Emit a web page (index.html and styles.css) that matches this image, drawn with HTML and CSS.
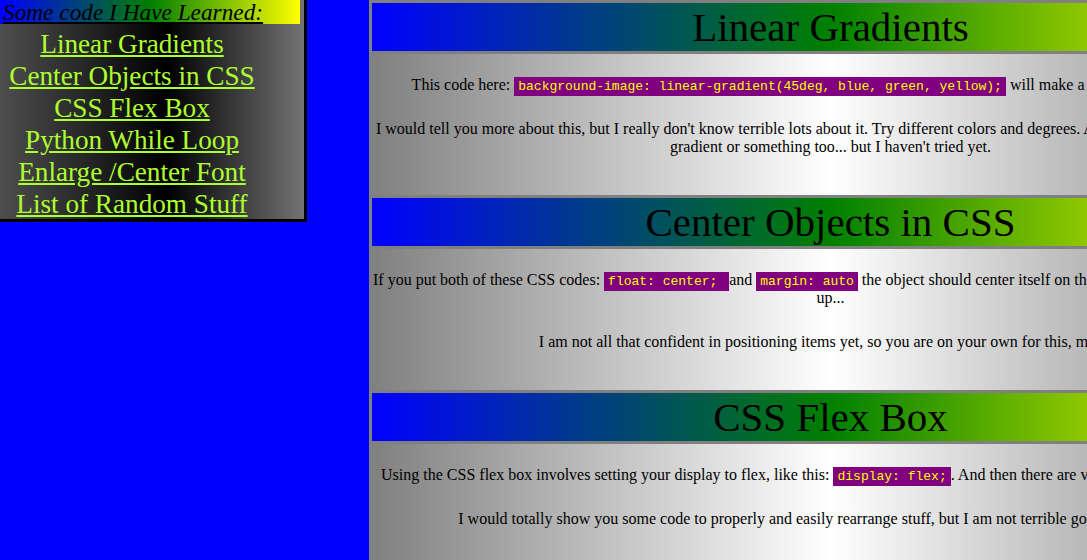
FILE: index.html
```html
<!DOCTYPE html>
<html lang="en">
<head>
<meta charset="utf-8">
<title>Some code I Have Learned</title>
<link rel="stylesheet" href="styles.css">
</head>
<body>
<nav class="nav">
  <div class="nav-title">Some code I Have Learned:</div>
  <ul class="nav-links">
    <li><a href="#linear">Linear Gradients</a></li>
    <li><a href="#center">Center Objects in CSS</a></li>
    <li><a href="#flex">CSS Flex Box</a></li>
    <li><a href="#python">Python While Loop</a></li>
    <li><a href="#font">Enlarge /Center Font</a></li>
    <li><a href="#random">List of Random Stuff</a></li>
  </ul>
</nav>
<main class="main">
  <section class="topic" id="linear">
    <h2 class="topic-title">Linear Gradients</h2>
    <div class="topic-body">
      <p>This code here: <code>background-image: linear-gradient(45deg, blue, green, yellow);</code> will make a gradient like the headers.</p>
      <p>I would tell you more about this, but I really don't know terrible lots about it. Try different colors and degrees. And you can also make a radial gradient or something too... but I haven't tried yet.</p>
    </div>
  </section>
  <section class="topic" id="center">
    <h2 class="topic-title">Center Objects in CSS</h2>
    <div class="topic-body">
      <p>If you put both of these CSS codes: <code>float: center; </code> and <code>margin: auto</code> the object should center itself on the screen. But it can mess things up...</p>
      <p>I am not all that confident in positioning items yet, so you are on your own for this, mostly.</p>
    </div>
  </section>
  <section class="topic" id="flex">
    <h2 class="topic-title">CSS Flex Box</h2>
    <div class="topic-body">
      <p>Using the CSS flex box involves setting your display to flex, like this: <code>display: flex;</code>. And then there are various ways to arrange things.</p>
      <p>I would totally show you some code to properly and easily rearrange stuff, but I am not terrible good at it by myself.</p>
    </div>
  </section>
</main>
</body>
</html>
```

FILE: styles.css
```css
html {
  overflow: hidden;
  background: #0000ff;
}

body {
  margin: 0;
  display: flex;
  align-items: flex-start;
  background: #0000ff;
  font-family: "Liberation Serif", "Times New Roman", serif;
  font-size: 16px;
  color: #000;
}

.nav {
  flex: none;
  width: 304px;
  border-right: 3px solid #000;
  border-bottom: 3px solid #000;
  background: linear-gradient(to right, #4e4e4e 0%, #000 55%, #737373 100%);
}

.nav-title {
  width: 297px;
  height: 24px;
  padding-left: 3px;
  font-size: 23.3px;
  line-height: 24px;
  font-style: italic;
  text-decoration: underline;
  background: linear-gradient(to right, #0000ff, #008000, #ffff00);
  white-space: nowrap;
}

.nav-links {
  list-style: none;
  margin: 0;
  padding: 4px 40px 0 0;
  height: 191px;
  text-align: center;
}

.nav-links li {
  font-size: 27.2px;
  line-height: 32px;
}

.nav-links a {
  color: #adff2f;
  text-decoration: underline;
}

.main {
  flex: none;
  width: 917px;
  margin-left: 62px;
  border-left: 3px solid #808080;
  border-right: 3px solid #808080;
  background: linear-gradient(to right, #808080, #ffffff, #808080);
}

.topic-title {
  margin: 0;
  height: 48px;
  border-top: 3px solid #808080;
  border-bottom: 3px solid #808080;
  background: linear-gradient(to right, #0000ff, #008000, #ffff00);
  font-size: 41px;
  font-weight: normal;
  line-height: 48px;
  text-align: center;
}

.topic-body {
  display: flex;
  flex-direction: column;
  gap: 26px;
  padding: 22px 0 39px;
  text-align: center;
}

.topic-body p {
  margin: 0;
  line-height: 18px;
}

code {
  font-family: "Liberation Mono", "Courier New", monospace;
  font-size: 13px;
  line-height: 1;
  background: #800080;
  color: #ffff00;
  padding: 2px 4px;
}
```
